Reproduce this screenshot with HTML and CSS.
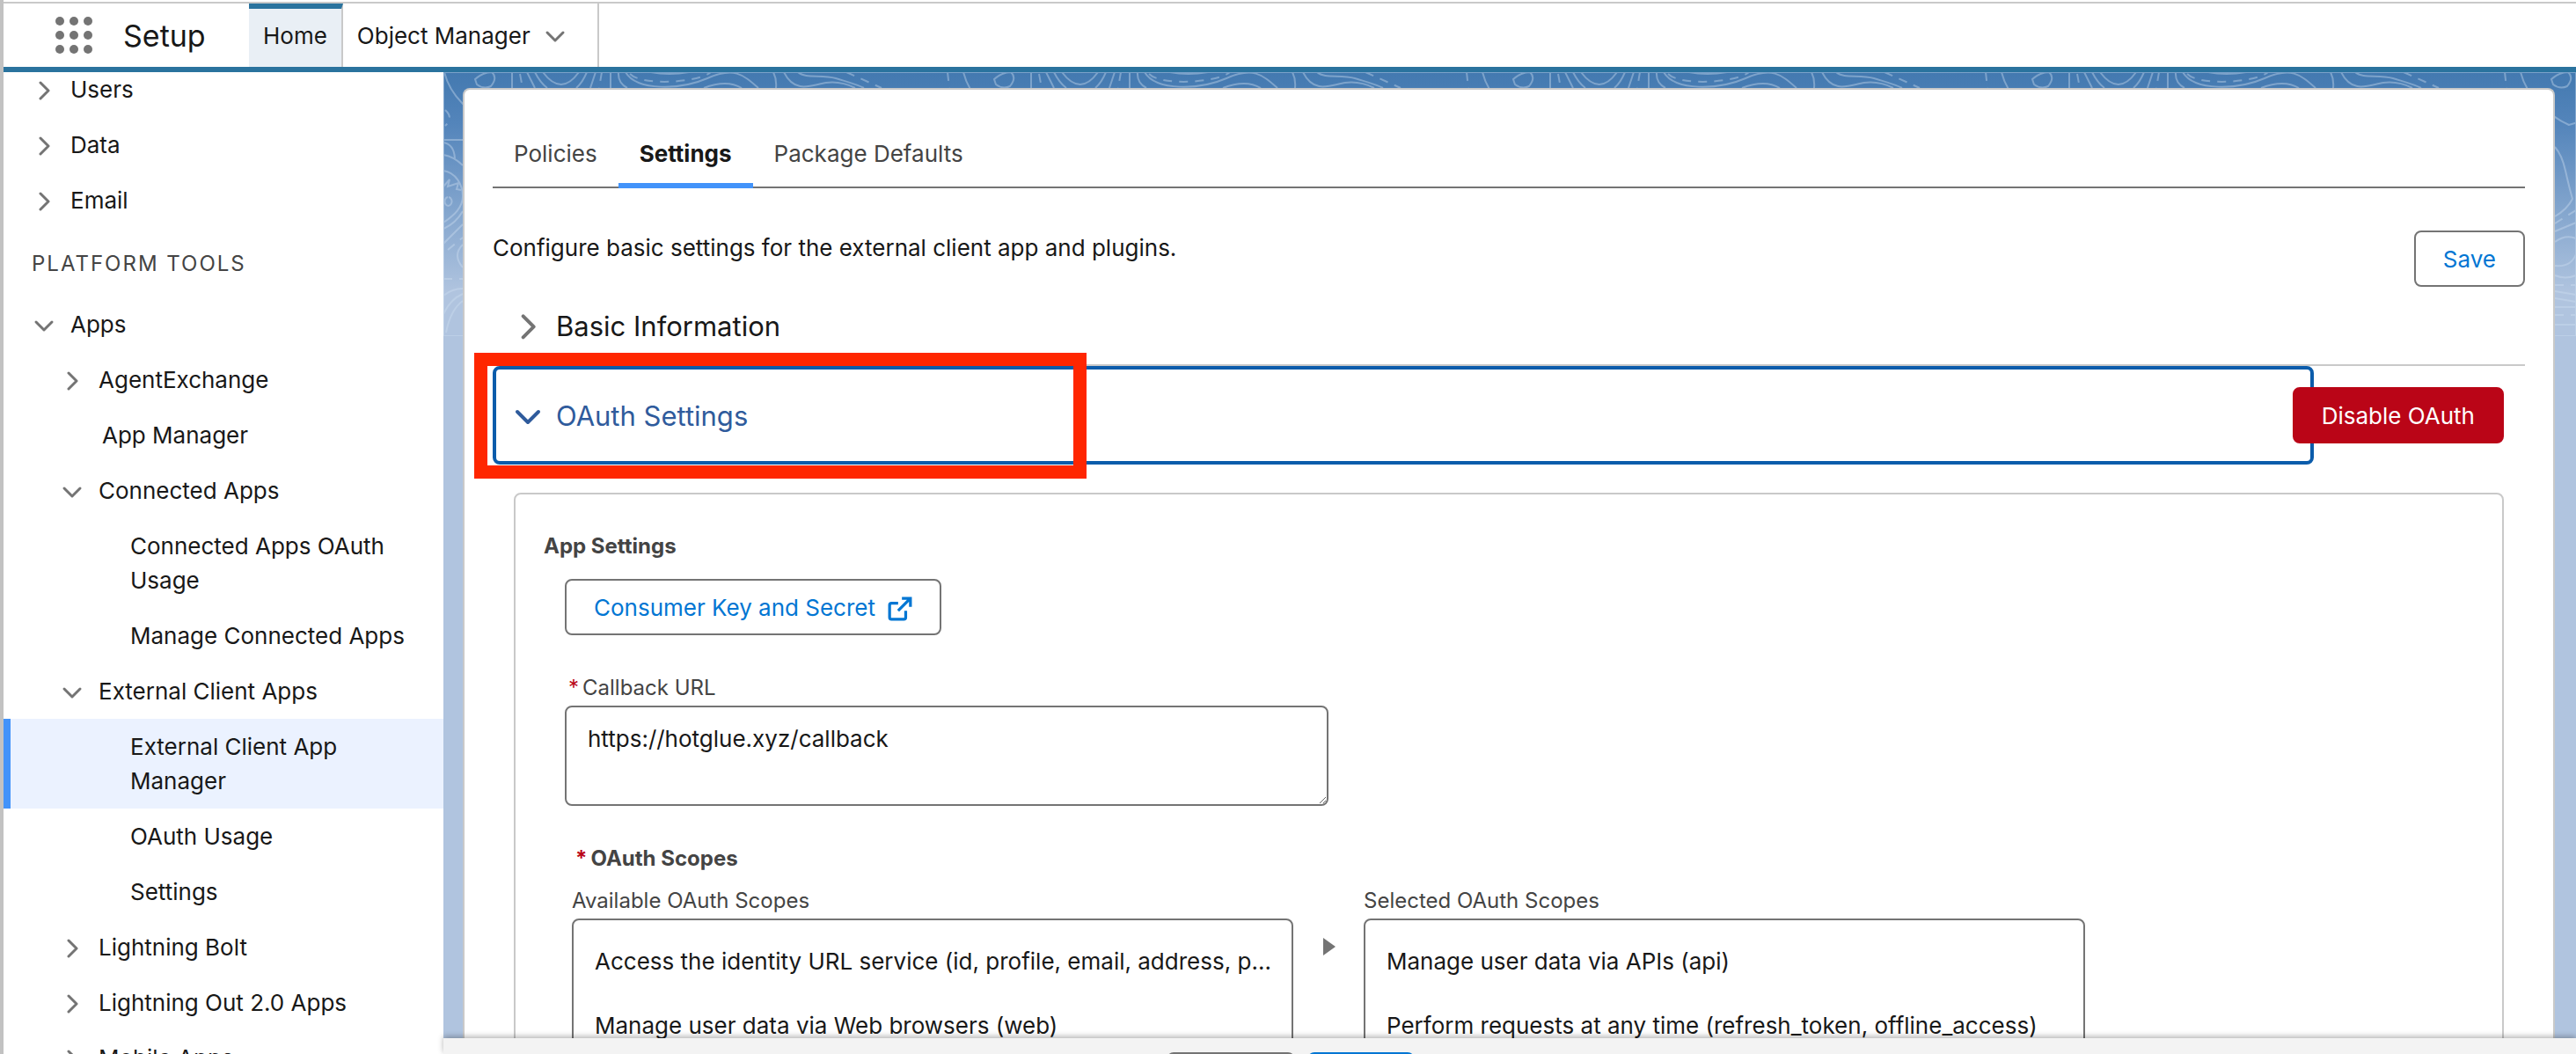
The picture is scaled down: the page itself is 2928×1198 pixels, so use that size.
FILE: index.html
```html
<!DOCTYPE html>
<html lang="en">
<head>
    <meta charset="UTF-8">
    <title>External Client App Manager | Setup</title>
    <meta name="viewport" content="width=device-width, initial-scale=1.0">
    <link rel="stylesheet" href="styles.css">
</head>
<body>
    <!-- Shared icons -->
    <svg class="sprite" aria-hidden="true">
        <symbol id="right" viewBox="0 0 24 24"><path d="M8 4l9 9-9 9"/></symbol>
        <symbol id="down" viewBox="0 0 24 24"><path d="M3 9l9 9 9-9"/></symbol>
    </svg>

    <header class="top-bar">
        <button class="waffle" aria-label="App Launcher">
            <svg viewBox="0 0 44 44">
                <circle cx="6" cy="6" r="5"/><circle cx="22" cy="6" r="5"/><circle cx="38" cy="6" r="5"/>
                <circle cx="6" cy="22" r="5"/><circle cx="22" cy="22" r="5"/><circle cx="38" cy="22" r="5"/>
                <circle cx="6" cy="38" r="5"/><circle cx="22" cy="38" r="5"/><circle cx="38" cy="38" r="5"/>
            </svg>
        </button>
        <span class="app-name">Setup</span>
        <nav class="top-nav">
            <a href="#" class="top-link active">Home</a>
            <a href="#" class="top-link with-menu">Object Manager <svg class="chevron"><use href="#down"/></svg></a>
        </nav>
    </header>

    <div class="layout">
        <nav class="sidebar">
            <a href="#" class="item"><svg class="chevron"><use href="#right"/></svg>Users</a>
            <a href="#" class="item"><svg class="chevron"><use href="#right"/></svg>Data</a>
            <a href="#" class="item"><svg class="chevron"><use href="#right"/></svg>Email</a>
            <h2 class="sidebar-title">Platform Tools</h2>
            <a href="#" class="item"><svg class="chevron"><use href="#down"/></svg>Apps</a>
            <a href="#" class="item level-2"><svg class="chevron"><use href="#right"/></svg>AgentExchange</a>
            <a href="#" class="item leaf-2">App Manager</a>
            <a href="#" class="item level-2"><svg class="chevron"><use href="#down"/></svg>Connected Apps</a>
            <a href="#" class="item leaf-3">Connected Apps OAuth Usage</a>
            <a href="#" class="item leaf-3">Manage Connected Apps</a>
            <a href="#" class="item level-2"><svg class="chevron"><use href="#down"/></svg>External Client Apps</a>
            <a href="#" class="item leaf-3 selected">External Client App Manager</a>
            <a href="#" class="item leaf-3">OAuth Usage</a>
            <a href="#" class="item leaf-3">Settings</a>
            <a href="#" class="item level-2"><svg class="chevron"><use href="#right"/></svg>Lightning Bolt</a>
            <a href="#" class="item level-2"><svg class="chevron"><use href="#right"/></svg>Lightning Out 2.0 Apps</a>
            <a href="#" class="item level-2"><svg class="chevron"><use href="#right"/></svg>Mobile Apps</a>
        </nav>

        <main class="content">
            <!-- Contour lines behind the card -->
            <svg class="contours" aria-hidden="true">
                <defs>
                    <pattern id="topo" width="590" height="300" patternUnits="userSpaceOnUse">
                        <path d="M1 0Q6 20 22 36T56 60L66 57M36 8Q45 0 55 0Q62 6 54 16Q46 20 38 14ZM78 0V18M95 0L104 18M104 0Q110 12 118 18M163 0Q158 12 151 18M113 0Q134 28 154 0M173 0L167 18M190 0V18M199 0Q198 12 209 18M207 0C220 22 270 20 300 7S340 2 358 18M236 0Q256 4 279 0M296 18Q322 8 339 18M375 0Q379 8 378 18M387 0C400 26 420 14 435 12S460 14 468 18M403 0C412 8 430 2 446 7S470 14 478 18"/>
                        <path d="M0 77H22M0 80Q12 82 13 98M0 94Q12 96 22 106M0 112C14 114 22 128 22 141S12 163 0 171M0 130L7 122 5 130 17 126 15 133 20 134M5 142a4 5 0 1 0 1 0M0 178Q14 172 22 158M0 195L22 173M22 196Q10 208 22 222M0 254Q10 246 22 246M0 275Q8 258 22 252M3 296Q8 270 22 260"/>
                        <path d="M40 85Q48 94 52 112T60 144Q54 156 40 164M40 181L64 171M40 193Q52 184 64 189M40 220Q58 222 64 207M40 231Q52 236 64 231M40 249L64 253M40 257L64 261M40 267H64M40 287H64"/>
                        <path class="dashed" d="M87 2L90 18M180 0L177 18M212 2C226 16 290 12 304 0M458 0L498 18M573 0L575 18M2 43Q12 52 2 61M5 202L22 188M0 235H22M40 172L64 157M40 242H64M40 276H64"/>
                    </pattern>
                </defs>
                <rect width="100%" height="300" fill="url(#topo)"/>
            </svg>

            <div class="card">
                <div class="tabs" role="tablist">
                    <button class="tab" role="tab">Policies</button>
                    <button class="tab active" role="tab" aria-selected="true">Settings</button>
                    <button class="tab" role="tab">Package Defaults</button>
                </div>

                <div class="intro">
                    <p>Configure basic settings for the external client app and plugins.</p>
                    <button class="button">Save</button>
                </div>

                <button class="section-toggle"><svg class="chevron"><use href="#right"/></svg>Basic Information</button>

                <div class="section-row">
                    <button class="section-toggle focused" aria-expanded="true"><svg class="chevron"><use href="#down"/></svg>OAuth Settings</button>
                    <button class="button destructive">Disable OAuth</button>
                    <div class="highlight"></div>
                </div>

                <div class="panel">
                    <h3 class="panel-title">App Settings</h3>
                    <div class="panel-body">
                        <button class="button">Consumer Key and Secret
                            <svg class="external" viewBox="0 0 26 26"><path d="M11 7H4a2 2 0 0 0-2 2v13a2 2 0 0 0 2 2h13a2 2 0 0 0 2-2v-7M15 2h9v9M23 3L11 15"/></svg>
                        </button>

                        <label class="label callback-label" for="callback"><span class="required">*</span>Callback URL</label>
                        <textarea class="callback" id="callback">https://hotglue.xyz/callback</textarea>

                        <div class="scopes">
                            <h4 class="label scopes-title"><span class="required">*</span>OAuth Scopes</h4>
                            <div class="dueling">
                                <div class="list">
                                    <span class="label" id="available">Available OAuth Scopes</span>
                                    <ul class="listbox" role="listbox" aria-labelledby="available">
                                        <li role="option">Access the identity URL service (id, profile, email, address, p...</li>
                                        <li role="option">Manage user data via Web browsers (web)</li>
                                    </ul>
                                </div>
                                <button class="move" aria-label="Move to Selected"><svg viewBox="0 0 14 20"><path d="M0 0l14 10L0 20z"/></svg></button>
                                <div class="list">
                                    <span class="label" id="chosen">Selected OAuth Scopes</span>
                                    <ul class="listbox" role="listbox" aria-labelledby="chosen">
                                        <li role="option">Manage user data via APIs (api)</li>
                                        <li role="option">Perform requests at any time (refresh_token, offline_access)</li>
                                    </ul>
                                </div>
                            </div>
                        </div>
                    </div>
                </div>
            </div>

            <footer class="footer">
                <button class="button cancel" aria-label="Cancel"></button>
                <button class="button brand" aria-label="Save changes"></button>
            </footer>
        </main>
    </div>
</body>
</html>
```
FILE: styles.css
```css
* {
    box-sizing: border-box;
}

body {
    margin: 0;
    height: 100vh;
    display: flex;
    flex-direction: column;
    overflow: hidden;
    border-left: 4px solid #c2c2c2;
    background-color: white;
    color: #181818;
    font-family: Inter, "Liberation Sans", sans-serif;
    font-size: 26px;
    line-height: 39px;
}

a {
    color: inherit;
    text-decoration: none;
}

button {
    font: inherit;
    color: inherit;
    background: none;
    border: none;
    padding: 0;
    cursor: pointer;
}

h2, h3, h4, p, ul {
    margin: 0;
    padding: 0;
}

.sprite {
    position: absolute;
    width: 0;
    height: 0;
}

.chevron {
    width: 24px;
    height: 24px;
    flex: none;
    fill: none;
    stroke: #747474;
    stroke-width: 3;
    stroke-linecap: round;
    stroke-linejoin: round;
}

/* Header */
.top-bar {
    flex: none;
    height: 82px;
    display: flex;
    align-items: stretch;
    padding-left: 58px;
    border-bottom: 6px solid #2a739e;
    box-shadow: inset 0 2px white, inset 0 4px #c9c9c9;
}

.waffle {
    width: 44px;
    margin-right: 34px;
}

.waffle svg {
    display: block;
    width: 44px;
    height: 44px;
    margin-top: 4px;
    fill: #747474;
}

.app-name {
    width: 143px;
    padding-top: 4px;
    font-size: 34px;
    line-height: 74px;
}

.top-nav {
    display: flex;
    margin-top: 4px;
}

.top-link {
    display: flex;
    align-items: center;
    padding: 0 16px;
    border-right: 2px solid #c9c9c9;
}

.top-link.active {
    background-color: #e9eff5;
    border-top: 6px solid #2a739e;
    padding-bottom: 6px;
}

.with-menu {
    gap: 16px;
    padding-right: 36px;
}

/* Sidebar */
.layout {
    flex: 1;
    min-height: 0;
    display: flex;
}

.sidebar {
    flex: none;
    width: 500px;
    overflow: hidden;
}

.sidebar .item:first-child {
    margin-top: -12px;
}

.item {
    display: flex;
    align-items: center;
    gap: 18px;
    padding: 12px 34px;
}

.level-2 {
    padding-left: 66px;
}

.leaf-2 {
    padding-left: 112px;
}

.leaf-3 {
    padding-left: 144px;
}

.selected {
    background-color: #ebf2ff;
    box-shadow: inset 8px 0 #4293fa;
}

.sidebar-title {
    padding: 22px 32px 18px;
    color: #444;
    font-size: 24px;
    font-weight: normal;
    letter-spacing: 2px;
    line-height: 38px;
    text-transform: uppercase;
}

/* Content */
.content {
    position: relative;
    flex: 1;
    min-width: 0;
    display: flex;
    flex-direction: column;
    padding: 18px 24px 0 22px;
    background: linear-gradient(#4379b0, #5485bb 60px, #b0c4df 250px);
}

.contours {
    position: absolute;
    top: 0;
    left: 0;
    width: 100%;
    height: 300px;
    fill: none;
    stroke: #d0e0f2;
    stroke-width: 2;
    opacity: 0.4;
}

.dashed {
    stroke-dasharray: 10 8;
}

.card {
    position: relative;
    flex: 1;
    min-height: 0;
    overflow: hidden;
    padding: 32px;
    background-color: white;
    border: 2px solid #c9c9c9;
    border-bottom: none;
    border-radius: 8px 8px 0 0;
}

.tabs {
    display: flex;
    border-bottom: 2px solid #747474;
}

.tab {
    height: 80px;
    margin-bottom: -2px;
    padding: 0 24px;
    color: #444;
}

.tab.active {
    color: #181818;
    font-weight: bold;
    border-bottom: 6px solid #4293fa;
    padding-top: 6px;
}

.intro {
    display: flex;
    justify-content: space-between;
    align-items: flex-start;
    padding-top: 48px;
}

.button {
    display: inline-flex;
    align-items: center;
    gap: 14px;
    height: 64px;
    padding: 0 31px;
    background-color: white;
    border: 2px solid #747474;
    border-radius: 8px;
    color: #0176d3;
}

.button.destructive {
    background-color: #ba0517;
    border-color: #ba0517;
    color: white;
}

.section-toggle {
    display: flex;
    align-items: center;
    gap: 16px;
    width: 100%;
    height: 90px;
    padding-left: 24px;
    font-size: 31px;
    border-bottom: 2px solid #c9c9c9;
}

.section-toggle .chevron {
    width: 32px;
    height: 32px;
}

.section-row {
    position: relative;
    display: flex;
    align-items: center;
    padding-right: 24px;
}

.section-toggle.focused {
    flex: 1;
    height: 112px;
    padding-left: 20px;
    border: 4px solid #0b5cab;
    border-radius: 8px;
    color: #2f5b9c;
}

.focused .chevron {
    stroke: #2f5b9c;
}

.section-row .destructive {
    margin-left: -24px;
    position: relative;
}

.highlight {
    position: absolute;
    top: -15px;
    left: -21px;
    width: 696px;
    height: 143px;
    border: 15px solid #ff2600;
    pointer-events: none;
}

.panel {
    margin: 32px 24px 0;
    padding: 40px 32px;
    border: 2px solid #c9c9c9;
    border-radius: 8px;
}

.panel-title {
    color: #444;
    font-size: 24px;
    line-height: 38px;
}

.panel-body {
    padding: 18px 24px 0;
}

.external {
    width: 28px;
    height: 28px;
    margin-top: 4px;
    fill: none;
    stroke: #0176d3;
    stroke-width: 3;
}

.label {
    display: block;
    color: #444;
    font-size: 24px;
    line-height: 36px;
}

.required {
    margin-right: 4px;
    color: #ba0517;
}

.callback-label {
    margin-top: 42px;
    padding: 0 4px 2px;
}

.callback {
    display: block;
    width: 868px;
    height: 114px;
    padding: 16px 24px;
    border: 2px solid #747474;
    border-radius: 8px;
    background: white;
    color: inherit;
    font: inherit;
}

.scopes {
    padding: 42px 8px 0;
}

.scopes-title {
    padding: 0 4px;
    margin-bottom: 12px;
}

.dueling {
    display: flex;
}

.list {
    width: 820px;
}

.listbox {
    height: 400px;
    margin-top: 2px;
    padding: 10px 0;
    border: 2px solid #747474;
    border-radius: 8px;
    list-style: none;
}

.listbox li {
    padding: 17px 8px 17px 24px;
    overflow: hidden;
    white-space: nowrap;
    text-overflow: ellipsis;
}

.move {
    width: 80px;
    height: 20px;
    margin-top: 60px;
}

.move svg {
    display: block;
    width: 14px;
    height: 20px;
    margin-left: 34px;
    fill: #747474;
}

/* Footer */
.footer {
    position: relative;
    flex: none;
    display: flex;
    justify-content: center;
    gap: 14px;
    height: 18px;
    margin: 0 -24px 0 -22px;
    padding: 16px 498px 0 0;
    overflow: hidden;
    background-color: #f3f3f3;
    box-shadow: 0 -2px 6px rgba(0, 0, 0, 0.3);
}

.cancel {
    width: 146px;
    background-color: #747474;
}

.brand {
    width: 122px;
    background-color: #0176d3;
    border-color: #0176d3;
}
```
